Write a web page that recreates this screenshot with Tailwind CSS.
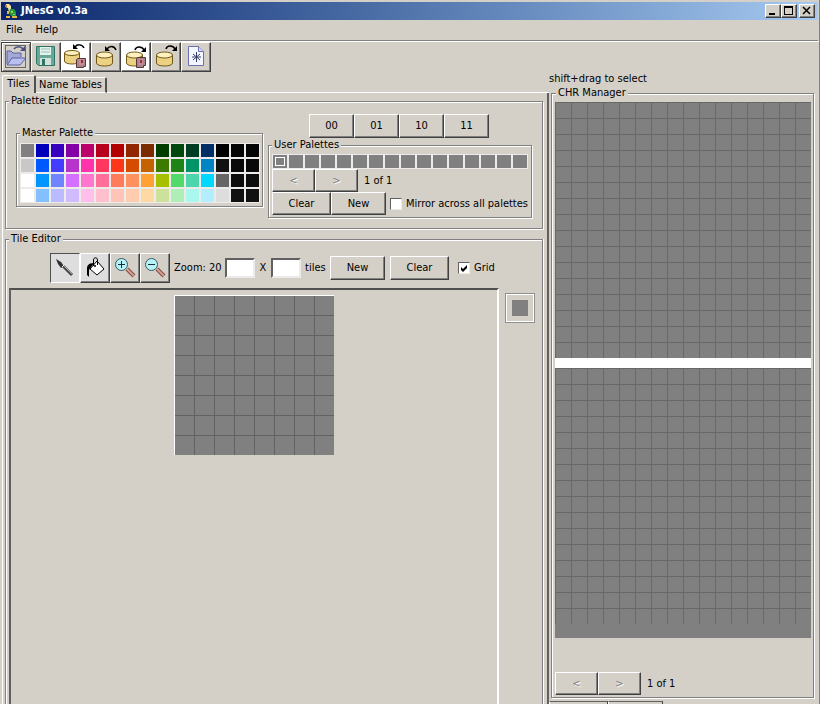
<!DOCTYPE html>
<html lang="en">
<head>
    <meta charset="UTF-8">
    <meta name="viewport" content="width=device-width, initial-scale=1.0">
    <title>JNesG v0.3a</title>
    <script src="https://cdn.jsdelivr.net/npm/@tailwindcss/browser@4"></script>
</head>
<body class="h-screen overflow-hidden flex flex-col bg-[#d4d0c8] pt-[2px] pl-px border-r border-[#808080] font-['Tahoma','DejaVu_Sans_Condensed','DejaVu_Sans',sans-serif] text-[11px] leading-[14px] text-black">

    <!-- Title bar -->
    <header class="shrink-0 h-[18px] mr-px flex items-center pl-[2px] pr-[3px] bg-linear-to-r from-[#0a246a] to-[#a6caf0]">
        <svg class="w-4 h-4" viewBox="0 0 16 16">
            <path d="M3 1h3l2 2v4l1 2H6L5 5 2 4z" fill="#efe2a0"/>
            <path d="M2 2h2v2H2z" fill="#c87828"/>
            <path d="M7 6h4l2 3v4H8L6 10z" fill="#259a35"/>
            <path d="M8 8h2v2H8zM10 11h2v1h-2z" fill="#86dc64"/>
            <path d="M4 8h2v3H4zM3 13h4v2H3zM9 13h5v2H9z" fill="#e6b84a"/>
        </svg>
        <h1 class="ml-[2px] font-bold text-white">JNesG v0.3a</h1>
        <div class="ml-auto flex">
            <button aria-label="Minimize" class="w-4 h-[14px] bg-[#d4d0c8] border border-t-white border-l-white border-r-[#404040] border-b-[#404040] shadow-[inset_-1px_-1px_0_#808080]">
                <svg class="w-[14px] h-3" viewBox="0 0 14 12"><path d="M3 8h6v2H3z"/></svg>
            </button>
            <button aria-label="Maximize" class="w-4 h-[14px] bg-[#d4d0c8] border border-t-white border-l-white border-r-[#404040] border-b-[#404040] shadow-[inset_-1px_-1px_0_#808080]">
                <svg class="w-[14px] h-3" viewBox="0 0 14 12"><path d="M2 1h9v9H2zM3 3v6h7V3z" fill-rule="evenodd"/></svg>
            </button>
            <button aria-label="Close" class="ml-[2px] w-4 h-[14px] bg-[#d4d0c8] border border-t-white border-l-white border-r-[#404040] border-b-[#404040] shadow-[inset_-1px_-1px_0_#808080]">
                <svg class="w-[14px] h-3" viewBox="0 0 14 12"><path d="M3 2l7 7M10 2L3 9" stroke="#000" stroke-width="1.500"/></svg>
            </button>
        </div>
    </header>

    <!-- Menu -->
    <nav class="shrink-0 h-[21px] mr-px flex items-center gap-[13px] pl-[5px] border-b border-[#808080]">
        <button>File</button>
        <button>Help</button>
    </nav>

    <!-- Toolbar -->
    <div class="shrink-0 flex border-t border-white">
        <button aria-label="Open" class="size-[30px] grid place-items-center border border-[#404040] shadow-[inset_1px_1px_0_#fff,inset_-1px_-1px_0_#808080]">
            <svg class="size-7" viewBox="-2 -2 28 28">
                <rect x="1.500" y=".5" width="20" height="22" fill="none" stroke="#000" stroke-dasharray="1 1"/>
                <path d="M3 19V6h4l2 2h8v4" fill="#a3a9d6" stroke="#5a62a4"/>
                <path d="M3 20l5-7h14l-6 7z" fill="#b9c0f0" stroke="#5a62a4"/>
                <path d="M10 4c2-3 7-3 9 0" fill="none" stroke="#484e80" stroke-width="1.500"/>
                <path d="M21 1v5h-5z" fill="#484e80"/>
            </svg>
        </button>
        <button aria-label="Save" class="size-[30px] grid place-items-center border border-t-white border-l-white border-r-[#404040] border-b-[#404040] shadow-[inset_-1px_-1px_0_#808080]">
            <svg class="size-7" viewBox="-2 -2 28 28">
                <path d="M2.500 1.500h18v19h-16l-2-2z" fill="#67a898" stroke="#2e7566"/>
                <path d="M6 2h11v8H6z" fill="#e4f2ec"/>
                <path d="M7 4h9M7 7h9" stroke="#93c4b5"/>
                <path d="M6 13h11v7H6z" fill="#d4e0da"/>
                <path d="M8 14h3v6H8z" fill="#2e7566"/>
            </svg>
        </button>
        <button aria-label="Import CHR from ROM" class="size-[30px] grid place-items-center bg-white border border-t-white border-l-white border-r-[#404040] border-b-[#404040] shadow-[inset_-1px_-1px_0_#808080]">
            <svg class="size-7" viewBox="-2 -2 28 28">
                <path d="M.5 8v8c0 4 15 4 15 0V8" fill="#ecd183" stroke="#705818"/>
                <ellipse cx="8" cy="8" rx="7.500" ry="2.500" fill="#fff0bd" stroke="#705818"/>
                <path d="M11 2c2-3 7-3 9 1" fill="none" stroke="#000" stroke-width="1.500"/>
                <path d="M9 -1v5h5z"/>
                <path d="M13.500 13.500h8v8h-2v1h-7v-8z" fill="#a98488" stroke="#54383c"/>
                <path d="M15 14h5v6h-5z" fill="#c88c98"/><path d="M17 15h2v3h-2z" fill="#a02840"/>
            </svg>
        </button>
        <button aria-label="Import CHR" class="size-[30px] grid place-items-center border border-t-white border-l-white border-r-[#404040] border-b-[#404040] shadow-[inset_-1px_-1px_0_#808080]">
            <svg class="size-7" viewBox="-2 -2 28 28">
                <path d="M2.500 10v8c0 4 16 4 16 0v-8" fill="#ecd183" stroke="#705818"/>
                <ellipse cx="10.500" cy="10" rx="8" ry="3" fill="#fff0bd" stroke="#705818"/>
                <path d="M13 4c2-3 7-4 9 1" fill="none" stroke="#000" stroke-width="1.500"/>
                <path d="M11 1v5h5z"/>
            </svg>
        </button>
        <button aria-label="Export CHR to ROM" class="size-[30px] grid place-items-center bg-white border border-t-white border-l-white border-r-[#404040] border-b-[#404040] shadow-[inset_-1px_-1px_0_#808080]">
            <svg class="size-7" viewBox="-2 -2 28 28">
                <path d="M2.500 10v8c0 4 16 4 16 0v-8" fill="#ecd183" stroke="#705818"/>
                <ellipse cx="10.500" cy="10" rx="8" ry="3" fill="#fff0bd" stroke="#705818"/>
                <path d="M11 5c1-4 7-4 9 0" fill="none" stroke="#000" stroke-width="1.500"/>
                <path d="M22 2v5h-5z"/>
                <path d="M13.500 12.500h8v8h-2v2h-7v-9z" fill="#a98488" stroke="#54383c"/>
                <path d="M15 14h4v6h-4z" fill="#c88c98"/><path d="M16 15h2v3h-2z" fill="#a02840"/>
            </svg>
        </button>
        <button aria-label="Export CHR" class="size-[30px] grid place-items-center border border-t-white border-l-white border-r-[#404040] border-b-[#404040] shadow-[inset_-1px_-1px_0_#808080]">
            <svg class="size-7" viewBox="-2 -2 28 28">
                <path d="M2.500 10v8c0 4 16 4 16 0v-8" fill="#ecd183" stroke="#705818"/>
                <ellipse cx="10.500" cy="10" rx="8" ry="3" fill="#fff0bd" stroke="#705818"/>
                <path d="M12 4c1-4 7-4 9 0" fill="none" stroke="#000" stroke-width="1.500"/>
                <path d="M23 1v5h-5z"/>
            </svg>
        </button>
        <button aria-label="New" class="size-[30px] grid place-items-center border border-t-white border-l-white border-r-[#404040] border-b-[#404040] shadow-[inset_-1px_-1px_0_#808080]">
            <svg class="size-7" viewBox="-2 -2 28 28">
                <path d="M4.500 1.500h10l5 5v14h-15z" fill="#f4f6ff" stroke="#6a70b0"/>
                <path d="M14.500 1.500v5h5" fill="#d4d8f8" stroke="#6a70b0"/>
                <path d="M12.500 7v10M8 12h9M9 9l7 6M16 9l-7 6" stroke="#384068"/>
            </svg>
        </button>
    </div>

    <main class="grow min-h-0 flex">
        <!-- Left side: tabs -->
        <div class="grow min-w-0 flex flex-col pl-px pt-[3px]">
            <div class="flex items-end h-[18px] shrink-0">
                <button class="h-[18px] w-[34px] pb-[2px] border-t border-l border-white border-r-2 border-r-[#505050] rounded-t-[2px]">Tiles</button>
                <button class="h-4 w-[71px] border-t border-white border-b border-b-white border-r-2 border-r-[#505050] rounded-t-[2px]">Name Tables</button>
                <div class="grow border-b border-white"></div>
            </div>

            <div class="grow min-h-0 overflow-hidden flex flex-col pl-[2px] pr-1 pt-px gap-[3px] border-l border-l-white border-r-2 border-r-[#606060]">
                <!-- Palette Editor -->
                <fieldset class="shrink-0 min-w-0 h-[135px] border border-[#808080] shadow-[inset_1px_1px_0_#fff,1px_1px_0_#fff]">
                    <legend class="ml-[3px] px-[2px] bg-[#d4d0c8]">Palette Editor</legend>
                    <div class="flex items-start gap-[5px] pl-[10px] pt-[6px]">
                        <fieldset class="mt-3 min-w-0 w-[247px] border border-[#808080] shadow-[inset_1px_1px_0_#fff,1px_1px_0_#fff]">
                            <legend class="ml-[3px] px-[2px] bg-[#d4d0c8]">Master Palette</legend>
                            <div id="masterPalette" class="ml-[3px] mt-[3px] mb-[3px] w-[240px] grid grid-cols-16 bg-[#ecebe9]"></div>
                        </fieldset>
                        <div class="w-[264px]">
                            <div class="flex justify-center pr-[2px]">
                                <button class="w-[45px] h-6 border border-t-white border-l-white border-r-[#404040] border-b-[#404040] shadow-[inset_-1px_-1px_0_#808080]">00</button>
                                <button class="w-[45px] h-6 border border-t-white border-l-white border-r-[#404040] border-b-[#404040] shadow-[inset_-1px_-1px_0_#808080]">01</button>
                                <button class="w-[45px] h-6 border border-t-white border-l-white border-r-[#404040] border-b-[#404040] shadow-[inset_-1px_-1px_0_#808080]">10</button>
                                <button class="w-[45px] h-6 border border-t-white border-l-white border-r-[#404040] border-b-[#404040] shadow-[inset_-1px_-1px_0_#808080]">11</button>
                            </div>
                            <fieldset class="min-w-0 pb-[2px] px-[3px] pt-[2px] border border-[#808080] shadow-[inset_1px_1px_0_#fff,1px_1px_0_#fff]">
                                <legend class="px-[2px] bg-[#d4d0c8]">User Palettes</legend>
                                <div id="userPalette" class="flex w-64 bg-[#ecebe9]"></div>
                                <div class="flex items-center">
                                    <button disabled class="w-[43px] h-[23px] border border-t-white border-l-white border-r-[#404040] border-b-[#404040] shadow-[inset_-1px_-1px_0_#808080] text-[#808080] [text-shadow:1px_1px_0_#fff]">&lt;</button>
                                    <button disabled class="w-[43px] h-[23px] border border-t-white border-l-white border-r-[#404040] border-b-[#404040] shadow-[inset_-1px_-1px_0_#808080] text-[#808080] [text-shadow:1px_1px_0_#fff]">&gt;</button>
                                    <span class="ml-[6px]">1 of 1</span>
                                </div>
                                <div class="flex items-center">
                                    <button class="w-[59px] h-[23px] border border-t-white border-l-white border-r-[#404040] border-b-[#404040] shadow-[inset_-1px_-1px_0_#808080]">Clear</button>
                                    <button class="w-[55px] h-[23px] border border-t-white border-l-white border-r-[#404040] border-b-[#404040] shadow-[inset_-1px_-1px_0_#808080]">New</button>
                                    <label class="ml-1 flex items-center gap-1 whitespace-nowrap">
                                        <input type="checkbox" class="appearance-none size-3 bg-white border border-t-[#606060] border-l-[#606060] border-r-[#ecebe9] border-b-[#ecebe9]">
                                        Mirror across all palettes
                                    </label>
                                </div>
                            </fieldset>
                        </div>
                    </div>
                </fieldset>

                <!-- Tile Editor -->
                <fieldset class="grow min-h-0 min-w-0 border border-b-0 border-[#808080] shadow-[inset_1px_1px_0_#fff,1px_0_0_#fff]">
                    <legend class="ml-[3px] px-[2px] bg-[#d4d0c8]">Tile Editor</legend>
                    <div class="flex items-center pl-11 pt-[7px]">
                        <button aria-label="Brush" class="size-[30px] grid place-items-center bg-[#dedede] border border-t-[#505050] border-l-[#505050] border-r-white border-b-white">
                            <svg class="size-6" viewBox="0 0 24 24">
                                <path d="M3 3l5 3 3 4-3 2-3-4z" fill="#303030"/>
                                <path d="M10 10l9 9" stroke="#484848" stroke-width="3"/>
                                <path d="M9 11l3-3" stroke="#eee"/>
                                <path d="M11 10l8 8" stroke="#a8a8a8"/>
                            </svg>
                        </button>
                        <button aria-label="Fill" class="size-[30px] grid place-items-center bg-[#dedede] border border-t-white border-l-white border-r-[#404040] border-b-[#404040] shadow-[inset_-1px_-1px_0_#808080]">
                            <svg class="size-6" viewBox="0 0 24 24">
                                <path d="M7 13l7-8 7 8-7 6z" fill="#fff" stroke="#000"/>
                                <path d="M10.500 10V4c0-3 4-3 4 0v5" fill="none" stroke="#000"/>
                                <path d="M11 7c-6 0-7 3-7 6v6l2 2v-7z"/>
                                <circle cx="12" cy="10" r="1"/>
                            </svg>
                        </button>
                        <button aria-label="Zoom in" class="size-[30px] grid place-items-center border border-t-white border-l-white border-r-[#404040] border-b-[#404040] shadow-[inset_-1px_-1px_0_#808080]">
                            <svg class="size-6" viewBox="0 0 24 24">
                                <path d="M14 13l7 7" stroke="#805048" stroke-width="4"/>
                                <path d="M14 13l7 7" stroke="#d8a090" stroke-width="2"/>
                                <circle cx="8.500" cy="8.500" r="6" fill="#b7f3f5" stroke="#35586a"/>
                                <path d="M8.500 5v7M5 8.500h7" stroke="#103040"/>
                            </svg>
                        </button>
                        <button aria-label="Zoom out" class="size-[30px] grid place-items-center border border-t-white border-l-white border-r-[#404040] border-b-[#404040] shadow-[inset_-1px_-1px_0_#808080]">
                            <svg class="size-6" viewBox="0 0 24 24">
                                <path d="M14 13l7 7" stroke="#805048" stroke-width="4"/>
                                <path d="M14 13l7 7" stroke="#d8a090" stroke-width="2"/>
                                <circle cx="8.500" cy="8.500" r="6" fill="#b7f3f5" stroke="#35586a"/>
                                <path d="M5 8.500h7" stroke="#103040"/>
                            </svg>
                        </button>
                        <span class="ml-1 w-[51px] whitespace-nowrap">Zoom: 20</span>
                        <input type="text" aria-label="Width in tiles" class="w-[30px] h-5 bg-white border-2 border-t-[#606060] border-l-[#606060] border-r-[#ecebe9] border-b-[#ecebe9]">
                        <span class="w-4 text-center">X</span>
                        <input type="text" aria-label="Height in tiles" class="w-[30px] h-5 bg-white border-2 border-t-[#606060] border-l-[#606060] border-r-[#ecebe9] border-b-[#ecebe9]">
                        <span class="ml-1 w-[25px]">tiles</span>
                        <button class="w-[55px] h-6 border border-t-white border-l-white border-r-[#404040] border-b-[#404040] shadow-[inset_-1px_-1px_0_#808080]">New</button>
                        <button class="ml-[5px] w-[59px] h-6 border border-t-white border-l-white border-r-[#404040] border-b-[#404040] shadow-[inset_-1px_-1px_0_#808080]">Clear</button>
                        <label class="ml-[9px] flex items-center gap-1">
                            <span class="grid">
                                <input type="checkbox" checked class="col-start-1 row-start-1 appearance-none size-3 bg-white border border-t-[#606060] border-l-[#606060] border-r-[#ecebe9] border-b-[#ecebe9]">
                                <svg class="col-start-1 row-start-1 size-3 pointer-events-none" viewBox="0 0 12 12"><path d="M3 5l2 2 4-4v3L5 10 3 8z"/></svg>
                            </span>
                            Grid
                        </label>
                    </div>
                    <div class="flex items-start gap-[6px] pl-[3px] pr-[7px] mt-[5px] h-full">
                        <div class="grow h-full flex justify-center pt-[5px] pr-px border-2 border-t-[#505050] border-l-[#606060] border-r-white border-b-0">
                            <div class="size-40 border-t border-l border-white bg-[#808080] bg-[linear-gradient(to_right,transparent_19px,#626262_19px),linear-gradient(to_bottom,transparent_19px,#626262_19px)] bg-[size:20px_20px]"></div>
                        </div>
                        <div class="mt-[5px] size-[30px] grid place-items-center border border-[#909090] shadow-[inset_1px_1px_0_#fff,inset_-1px_-1px_0_#fff]">
                            <div class="size-4 bg-[#808080]"></div>
                        </div>
                    </div>
                </fieldset>
            </div>
        </div>

        <!-- Right side: CHR Manager -->
        <div class="shrink-0 w-[270px] flex flex-col">
            <p class="shrink-0">shift+drag to select</p>
            <fieldset class="shrink-0 min-w-0 ml-[2px] mr-[5px] pl-[3px] pt-[2px] pb-[2px] border border-[#808080] shadow-[inset_1px_1px_0_#fff,1px_1px_0_#fff]">
                <legend class="ml-px px-[2px] bg-[#d4d0c8]">CHR Manager</legend>
                <div class="w-64 h-64 bg-[#808080] bg-[linear-gradient(to_right,#686868_1px,transparent_1px),linear-gradient(to_bottom,#686868_1px,transparent_1px)] bg-[size:16px_16px]"></div>
                <div class="w-64 h-[10px] bg-white"></div>
                <div class="w-64 h-64 bg-[#808080] bg-[linear-gradient(to_right,#686868_1px,transparent_1px),linear-gradient(to_bottom,#686868_1px,transparent_1px)] bg-[size:16px_16px]"></div>
                <div class="w-64 h-[14px] bg-[#808080]"></div>
                <div class="mt-[34px] flex items-center">
                    <button disabled class="w-[43px] h-[23px] border border-t-white border-l-white border-r-[#404040] border-b-[#404040] shadow-[inset_-1px_-1px_0_#808080] text-[#808080] [text-shadow:1px_1px_0_#fff]">&lt;</button>
                    <button disabled class="w-[43px] h-[23px] border border-t-white border-l-white border-r-[#404040] border-b-[#404040] shadow-[inset_-1px_-1px_0_#808080] text-[#808080] [text-shadow:1px_1px_0_#fff]">&gt;</button>
                    <span class="ml-[6px]">1 of 1</span>
                </div>
            </fieldset>
            <div class="shrink-0 mt-[3px] flex">
                <button aria-label="Load" class="w-[59px] h-6 border border-t-[#606060] border-l-white border-r-[#404040] border-b-[#404040]"></button>
                <button aria-label="Store" class="w-[55px] h-6 border border-t-[#606060] border-l-white border-r-[#404040] border-b-[#404040]"></button>
            </div>
        </div>
    </main>

    <script>
        const nesColors = [
            "#808080", "#0000bb", "#3700bf", "#8400a6", "#bb006a", "#b7001e", "#b30000", "#912600", "#7b2b00", "#003e00", "#00480d", "#003c22", "#002f66", "#000000", "#050505", "#050505",
            "#c8c8c8", "#0059ff", "#443cff", "#b733cc", "#ff33aa", "#ff375e", "#ff371a", "#d54b00", "#c46200", "#3c7b00", "#1e8415", "#009566", "#0084c4", "#111111", "#090909", "#090909",
            "#ffffff", "#0095ff", "#6f84ff", "#d56fff", "#ff77cc", "#ff6f99", "#ff7b59", "#ff915f", "#ffa233", "#a6bf00", "#51d96a", "#4dd5ae", "#00d9ff", "#666666", "#0d0d0d", "#0d0d0d",
            "#ffffff", "#84bfff", "#bbbbff", "#d0bbff", "#ffbfea", "#ffbfcc", "#ffc4b7", "#ffccae", "#ffd9a2", "#cce199", "#aeeeb7", "#aaf7ee", "#b3eeff", "#dddddd", "#111111", "#111111"
        ];

        document.getElementById("masterPalette").innerHTML = nesColors
            .map(c => `<div class="h-[15px] border border-[#ecebe9]" style="background:${c}"></div>`)
            .join("");

        // first entry is the selected one
        let cells = "";
        for (let i = 0; i < 16; i++) {
            cells += i === 0
                ? `<div class="w-4 h-[15px] p-[2px] border border-[#ecebe9] bg-[#808080]"><div class="h-full border border-white"></div></div>`
                : `<div class="w-4 h-[15px] border border-[#ecebe9] bg-[#808080]"></div>`;
        }
        document.getElementById("userPalette").innerHTML = cells;
    </script>
</body>
</html>
